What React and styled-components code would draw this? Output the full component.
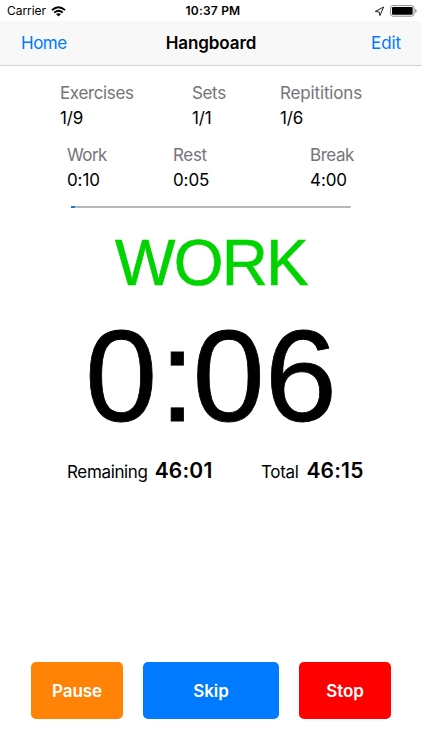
import React, { useState } from "react";
import styled, { createGlobalStyle } from "styled-components";

const stats = [
  { label: "Exercises", value: "1/9", width: 132 },
  { label: "Sets", value: "1/1", width: 88 },
  { label: "Repititions", value: "1/6", width: 100, spacing: -0.15 },
];

const times = [
  { label: "Work", value: "0:10", width: 106, spacing: -0.6 },
  { label: "Rest", value: "0:05", width: 137 },
  { label: "Break", value: "4:00", width: 60, spacing: -0.45 },
];

function StatusBar() {
  return (
    <StatusBarStyled>
      <div className="carrier">
        Carrier
        <svg width="15" height="11" viewBox="0 0 15 11">
          <path d="M0.9 4.1 Q7.5 -1.7 14.1 4.1" fill="none" stroke="#000" strokeWidth="1.9" />
          <path d="M3.2 6.6 Q7.5 2.9 11.8 6.6" fill="none" stroke="#000" strokeWidth="1.8" />
          <path d="M7.5 10.6 L5 8.1 Q7.5 6.3 10 8.1 Z" />
        </svg>
      </div>
      <div className="clock">10:37 PM</div>
      <div className="battery">
        <svg width="11" height="11" viewBox="0 0 11 11">
          <path
            d="M9.6 1 L1.2 5.5 L5.1 5.9 L5.9 9.6 Z"
            fill="none"
            stroke="#222"
            strokeWidth="1"
            strokeLinejoin="miter"
          />
        </svg>
        <svg width="27" height="12" viewBox="0 0 27 12">
          <rect x="0.6" y="0.6" width="23.4" height="10.6" rx="2.4" fill="none" stroke="#8c8c8c" />
          <rect x="2" y="2" width="20.6" height="7.8" rx="1" />
          <path d="M25.2 3.8 Q26.7 4.6 26.7 5.9 Q26.7 7.2 25.2 8 Z" fill="#8c8c8c" />
        </svg>
      </div>
    </StatusBarStyled>
  );
}

function StatRow({ items, left, top }) {
  return (
    <StatRowStyled $left={left} $top={top}>
      {items.map((item) => (
        <Stat key={item.label} $width={item.width} $spacing={item.spacing}>
          <dt>{item.label}</dt>
          <dd>{item.value}</dd>
        </Stat>
      ))}
    </StatRowStyled>
  );
}

function App() {
  const [paused, setPaused] = useState(false);
  return (
    <Screen>
      <GlobalStyle />
      <StatusBar />
      <NavBar>
        <NavButton>Home</NavButton>
        <h1>Hangboard</h1>
        <NavButton $right>Edit</NavButton>
      </NavBar>
      <StatRow items={stats} left={60} top={15} />
      <StatRow items={times} left={67} top={12} />
      <Progress>
        <Bar style={{ width: `${(14 / 2775) * 100 + 1}%` }} />
      </Progress>
      <Phase>WORK</Phase>
      <Timer>
        <span className="minutes">0</span>
        <span className="colon">:</span>06
      </Timer>
      <Totals>
        <Total $width={194}>
          Remaining <b>46:01</b>
        </Total>
        <Total $gap={8}>
          Total <b>46:15</b>
        </Total>
      </Totals>
      <Actions>
        <ActionButton $color="#ff8306" $width={92} onClick={() => setPaused(!paused)}>
          {paused ? "Resume" : "Pause"}
        </ActionButton>
        <ActionButton $color="#007aff" $width={136}>
          Skip
        </ActionButton>
        <ActionButton $color="#ff0000" $width={92}>
          Stop
        </ActionButton>
      </Actions>
    </Screen>
  );
}

const GlobalStyle = createGlobalStyle`
  * {
    box-sizing: border-box;
    margin: 0;
    padding: 0;
  }
  body {
    background: #fff;
    color: #000;
    font-family: Inter, "Liberation Sans", sans-serif;
  }
  button {
    border: 0;
    font-family: inherit;
    cursor: pointer;
  }
`;

const Screen = styled.main`
  display: flex;
  flex-direction: column;
  width: 422px;
  height: 750px;
  overflow: hidden;
`;

const StatusBarStyled = styled.header`
  display: grid;
  grid-template-columns: 1fr auto 1fr;
  align-items: center;
  height: 21px;
  padding: 1px 5px 0 7px;
  font-size: 12px;
  line-height: 20px;
  .carrier {
    display: flex;
    align-items: center;
    gap: 5px;
    letter-spacing: -0.05px;
  }
  .clock {
    padding-left: 2px;
    font-weight: 600;
    letter-spacing: 0.2px;
  }
  .battery {
    display: flex;
    align-items: center;
    justify-content: flex-end;
    gap: 5px;
  }
`;

const NavBar = styled.nav`
  display: grid;
  grid-template-columns: 1fr auto 1fr;
  align-items: center;
  height: 45px;
  padding: 0 21px;
  background: #f8f8f8;
  border-bottom: 1px solid #d2d2d2;
  h1 {
    font-size: 17px;
    font-weight: 600;
    letter-spacing: -0.1px;
  }
`;

const NavButton = styled.button`
  justify-self: ${(props) => (props.$right ? "end" : "start")};
  background: none;
  color: #007aff;
  font-size: 17px;
  letter-spacing: ${(props) => (props.$right ? "-0.1px" : "-0.5px")};
`;

const StatRowStyled = styled.dl`
  display: flex;
  padding-left: ${(props) => props.$left}px;
  margin-top: ${(props) => props.$top}px;
`;

const Stat = styled.div`
  width: ${(props) => props.$width}px;
  font-size: 17px;
  line-height: 25px;
  white-space: nowrap;
  dt {
    color: #747479;
    letter-spacing: ${(props) => props.$spacing ?? -0.35}px;
  }
  dd {
    letter-spacing: -0.1px;
  }
`;

const Progress = styled.div`
  flex: none;
  width: 280px;
  height: 2px;
  margin: 13px 0 0 71px;
  border-radius: 1px;
  background: #b7b7b7;
`;

const Bar = styled.div`
  height: 2px;
  background: #1579e6;
`;

const Phase = styled.h2`
  margin-top: 23px;
  color: #00d300;
  font: 400 64px/64px "Liberation Sans", Arial, sans-serif;
  letter-spacing: -1.8px;
  text-align: center;
  -webkit-text-stroke: 0.6px #00d300;
`;

const Timer = styled.div`
  margin-top: 16px;
  font: 400 130px/130px "Liberation Sans", Arial, sans-serif;
  text-align: center;
  -webkit-text-stroke: 0.8px #000;
  .minutes {
    letter-spacing: 2px;
  }
  .colon {
    letter-spacing: -3px;
  }
`;

const Totals = styled.div`
  display: flex;
  padding-left: 67px;
  margin-top: 17px;
`;

const Total = styled.div`
  display: flex;
  align-items: baseline;
  gap: ${(props) => props.$gap || 7}px;
  width: ${(props) => (props.$width ? `${props.$width}px` : "auto")};
  font-size: 17px;
  line-height: 26px;
  letter-spacing: -0.35px;
  b {
    font-size: 21px;
    font-weight: 600;
    letter-spacing: 0.2px;
  }
`;

const Actions = styled.footer`
  display: flex;
  justify-content: space-between;
  margin-top: auto;
  padding: 0 31px 31px;
`;

const ActionButton = styled.button`
  width: ${(props) => props.$width}px;
  height: 57px;
  border-radius: 5px;
  background: ${(props) => props.$color};
  color: #fff;
  font-size: 17px;
  font-weight: 600;
  letter-spacing: -0.05px;
`;

export default App;
